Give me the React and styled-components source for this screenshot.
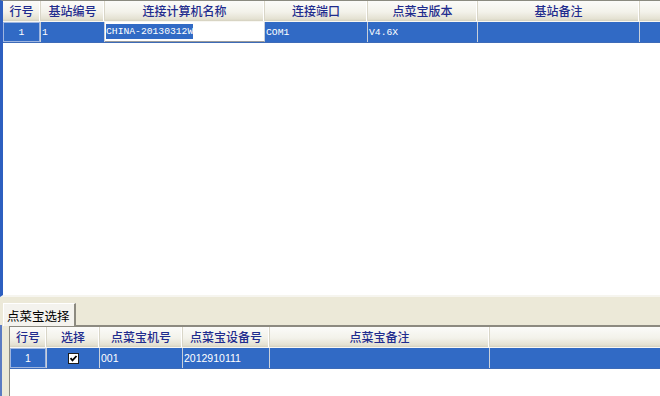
import React from "react";
import styled, { createGlobalStyle } from "styled-components";

const Global = createGlobalStyle`
  html, body { margin: 0; padding: 0; background: #ece9d8; }
  body { font-family: "Noto Sans CJK SC", "Noto Sans", sans-serif; }
  #root { width: 660px; height: 396px; overflow: hidden; }
`;

const Window = styled.div`
  width: 660px;
  height: 396px;
  display: flex;
  flex-direction: column;
  background: #ece9d8;
`;

const TopGrid = styled.div`
  height: 297px;
  flex: none;
  background: #ffffff;
  border-left: 3px solid #2d5fc0;
  border-top: 1px solid #8a8a80;
  border-bottom: 2px solid #f6f5ef;
  box-sizing: border-box;
  display: flex;
  flex-direction: column;
`;

const HeaderRow = styled.div`
  display: flex;
  height: 20px;
  flex: none;
  background: linear-gradient(#fbfbf9 0%, #f3f2ea 55%, #e4e1d2 90%, #d4d0bf 100%);
  border-bottom: 1px solid #f8f7f2;
`;

const HeadCell = styled.div`
  width: ${(p) => p.$w}px;
  flex: ${(p) => (p.$fill ? "1 1 auto" : "none")};
  box-sizing: border-box;
  display: flex;
  align-items: center;
  justify-content: center;
  font-size: 12px;
  line-height: 12px;
  font-weight: 500;
  color: #1f2c8e;
  border-right: ${(p) => (p.$fill ? "none" : "1px solid #d9d6c8")};
  box-shadow: ${(p) => (p.$fill ? "none" : "inset -1px 0 0 #ffffff")};
  white-space: nowrap;
`;

const DataRow = styled.div`
  display: flex;
  height: 20px;
  flex: none;
  background: #316ac5;
  border-bottom: 1px solid #3d6bb8;
`;

const Cell = styled.div`
  width: ${(p) => p.$w}px;
  flex: ${(p) => (p.$fill ? "1 1 auto" : "none")};
  box-sizing: border-box;
  display: flex;
  align-items: center;
  justify-content: ${(p) => (p.$center ? "center" : "flex-start")};
  padding-left: ${(p) => (p.$center ? 0 : 1)}px;
  color: #ffffff;
  font-family: ${(p) => (p.$sans ? '"Liberation Sans", Arial, sans-serif' : '"Liberation Mono", "DejaVu Sans Mono", monospace')};
  font-size: ${(p) => (p.$sans ? 10.5 : 9.7)}px;
  border-right: ${(p) => (p.$fill ? "none" : "1px solid #c9cfd9")};
  box-shadow: ${(p) => (p.$focus ? "inset 1px 1px 0 #9fb6e0, inset -1px -1px 0 #9fb6e0" : "none")};
  white-space: nowrap;
  overflow: hidden;
`;

const EditCell = styled.div`
  width: ${(p) => p.$w}px;
  flex: none;
  box-sizing: border-box;
  display: flex;
  align-items: center;
  background: #ffffff;
  border-right: 1px solid #c9cfd9;
  border-bottom: 1px solid #9a9a9a;
  padding-left: 1px;
`;

const Selected = styled.span`
  background: #316ac5;
  color: #ffffff;
  font-family: "Liberation Mono", "DejaVu Sans Mono", monospace;
  font-size: 9.7px;
  line-height: 15px;
  height: 15px;
  display: inline-block;
`;

const Empty = styled.div`
  flex: 1;
  background: #ffffff;
`;

const TabStrip = styled.div`
  height: 28px;
  flex: none;
  display: flex;
  align-items: flex-end;
  padding-left: 3px;
  background: #ece9d8;
`;

const Tab = styled.div`
  height: 23px;
  box-sizing: border-box;
  padding: 0 4px 0 3px;
  display: flex;
  align-items: center;
  font-size: 12.5px;
  color: #000000;
  background: #f4f3ee;
  border-left: 1px solid #ffffff;
  border-top: 1px solid #ffffff;
  border-right: 2px solid #8c8a80;
  position: relative;
  top: 1px;
`;

const LowerPanel = styled.div`
  flex: 1;
  display: flex;
  padding-left: 7px;
  background: #ece9d8;
  border-left: 2px solid #5b7bc2;
`;

const LowerGrid = styled.div`
  flex: 1;
  display: flex;
  flex-direction: column;
  background: #ffffff;
  border-top: 2px solid #8c8a80;
  border-left: 1px solid #8c8a80;
  box-sizing: border-box;
`;

const CheckBox = styled.div`
  width: 11px;
  height: 11px;
  box-sizing: border-box;
  background: #ffffff;
  border: 1px solid #1c1c1c;
  display: flex;
  align-items: center;
  justify-content: center;
`;

const topCols = [
  { w: 38, h: "行号" },
  { w: 64, h: "基站编号" },
  { w: 160, h: "连接计算机名称" },
  { w: 103, h: "连接端口" },
  { w: 110, h: "点菜宝版本" },
  { w: 162, h: "基站备注" },
];

const lowCols = [
  { w: 37, h: "行号" },
  { w: 53, h: "选择" },
  { w: 83, h: "点菜宝机号" },
  { w: 87, h: "点菜宝设备号" },
  { w: 220, h: "点菜宝备注" },
];

export default function App() {
  return (
    <>
      <Global />
      <Window>
        <TopGrid>
          <HeaderRow>
            {topCols.map((c) => (
              <HeadCell key={c.h} $w={c.w}>{c.h}</HeadCell>
            ))}
            <HeadCell $fill />
          </HeaderRow>
          <DataRow>
            <Cell $w={38} $center $focus>1</Cell>
            <Cell $w={64}>1</Cell>
            <EditCell $w={160}>
              <Selected>CHINA-20130312W</Selected>
            </EditCell>
            <Cell $w={103}>COM1</Cell>
            <Cell $w={110}>V4.6X</Cell>
            <Cell $w={162}></Cell>
            <Cell $fill></Cell>
          </DataRow>
          <Empty />
        </TopGrid>
        <TabStrip>
          <Tab>点菜宝选择</Tab>
        </TabStrip>
        <LowerPanel>
          <LowerGrid>
            <HeaderRow>
              {lowCols.map((c) => (
                <HeadCell key={c.h} $w={c.w}>{c.h}</HeadCell>
              ))}
              <HeadCell $fill />
            </HeaderRow>
            <DataRow>
              <Cell $w={37} $center $sans $focus>1</Cell>
              <Cell $w={53} $center>
                <CheckBox>
                  <svg width="9" height="9" viewBox="0 0 9 9">
                    <path d="M1.5 4.2 L3.5 6.4 L7.5 2" stroke="#000" strokeWidth="1.8" fill="none" />
                  </svg>
                </CheckBox>
              </Cell>
              <Cell $w={83} $sans>001</Cell>
              <Cell $w={87} $sans>2012910111</Cell>
              <Cell $w={220}></Cell>
              <Cell $fill></Cell>
            </DataRow>
            <Empty />
          </LowerGrid>
        </LowerPanel>
      </Window>
    </>
  );
}
